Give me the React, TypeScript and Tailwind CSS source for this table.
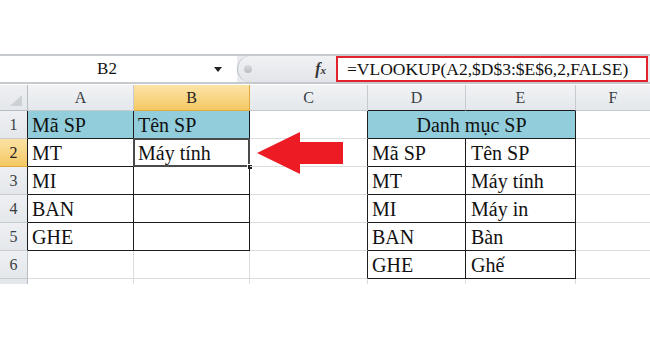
import React from "react"

const serif = "[font-family:'Liberation_Serif','Times_New_Roman',serif]"

// table border / gridline helpers
const grid = "border-r border-b border-[#dadcdd]"
const tbl = "border-r border-b border-[#1c1c1c]"
const blue = "bg-[#92cddc]"

type Row = {
  n: number
  a: string
  b: string
  d: string
  e: string
}

const rows: Row[] = [
  { n: 2, a: "MT", b: "Máy tính", d: "Mã SP", e: "Tên SP" },
  { n: 3, a: "MI", b: "", d: "MT", e: "Máy tính" },
  { n: 4, a: "BAN", b: "", d: "MI", e: "Máy in" },
  { n: 5, a: "GHE", b: "", d: "BAN", e: "Bàn" },
  { n: 6, a: "", b: "", d: "GHE", e: "Ghế" },
]

const Arrow = () => (
  <svg width="86" height="42" viewBox="0 0 86 42" className="absolute left-[7px] top-[-7px]">
    <polygon points="0,21 43,0 43,10 86,10 86,32 43,32 43,42" fill="#ed1c24" />
  </svg>
)

const RowHead = ({ n, active, edge }: { n: number; active?: boolean; edge?: boolean }) => (
  <div
    className={`w-[28px] h-full flex items-center justify-center text-[16px] border-b ${
      active
        ? "bg-gradient-to-b from-[#fbe3a4] to-[#f5c862] border-[#e2a93c] text-[#222]"
        : "bg-gradient-to-b from-[#eef0f3] to-[#e4e7eb] border-[#c7cbd0] text-[#3a3f46]"
    } ${edge ? "border-r border-r-[#1c1c1c]" : "border-r border-r-[#b7bcc3]"}`}
  >
    {n}
  </div>
)

export default function App() {
  return (
    <div className={`w-[650px] h-[340px] bg-white overflow-hidden ${serif}`}>
      <div className="h-[54px]" />

      {/* formula bar */}
      <div className="h-[30px] flex border-t-2 border-b-2 border-[#c6cacf] bg-[#e9ebee]">
        <div className="w-[237px] bg-white flex items-center">
          <div className="w-[214px] text-center text-[17px] text-[#111]">B2</div>
          <svg width="8" height="5" viewBox="0 0 8 5" className="mt-[1px]">
            <polygon points="0,0 8,0 4,5" fill="#222" />
          </svg>
        </div>
        <div className="w-[99px] flex items-center bg-gradient-to-b from-[#f0f2f4] to-[#e2e5e9] rounded-l-full border-l border-[#b9bec5]">
          <div className="ml-[6px] w-[8px] h-[8px] rounded-full bg-gradient-to-b from-[#d8dbdf] to-[#b9bdc3]" />
          <div className="ml-auto mr-[10px] text-[16px] italic font-bold text-[#333] leading-none">
            f<span className="text-[11px]">x</span>
          </div>
        </div>
        <div className="w-[312px] bg-white border-2 border-[#e3222b] flex items-center pl-[9px] text-[17.5px] text-[#111] whitespace-nowrap">
          =VLOOKUP(A2,$D$3:$E$6,2,FALSE)
        </div>
      </div>
      <div className="h-[1px]" />

      {/* column headers */}
      <div className="flex h-[26px] text-[16px] text-[#3a3f46]">
        <div className="w-[28px] h-full bg-gradient-to-b from-[#eef0f3] to-[#e4e7eb] border-r border-b border-[#b7bcc3] flex items-end justify-end pr-[5px] pb-[4px]">
          <svg width="12" height="11" viewBox="0 0 12 11">
            <polygon points="12,0 12,11 0,11" fill="#cdd1d6" />
          </svg>
        </div>
        <div className="w-[106px] h-full flex items-center justify-center bg-gradient-to-b from-[#f1f3f5] to-[#e4e7eb] border-r border-b border-[#c7cbd0]">A</div>
        <div className="w-[116px] h-full flex items-center justify-center bg-gradient-to-b from-[#fce4a6] to-[#f5c862] border-r border-b border-[#e2a93c] text-[#222]">B</div>
        <div className="w-[118px] h-full flex items-center justify-center bg-gradient-to-b from-[#f1f3f5] to-[#e4e7eb] border-r border-b border-[#c7cbd0]">C</div>
        <div className="w-[98px] h-full flex items-center justify-center bg-gradient-to-b from-[#f1f3f5] to-[#e4e7eb] border-r border-[#c7cbd0] border-b border-b-[#1c1c1c]">D</div>
        <div className="w-[110px] h-full flex items-center justify-center bg-gradient-to-b from-[#f1f3f5] to-[#e4e7eb] border-r border-[#c7cbd0] border-b border-b-[#1c1c1c]">E</div>
        <div className="w-[74px] h-full flex items-center justify-center bg-gradient-to-b from-[#f1f3f5] to-[#e4e7eb] border-b border-[#c7cbd0]">F</div>
      </div>

      {/* row 1 */}
      <div className="flex h-[28px] text-[20px] text-[#111]">
        <RowHead n={1} edge />
        <div className={`w-[106px] h-full flex items-center pl-[4px] ${blue} ${tbl}`}>Mã SP</div>
        <div className={`w-[116px] h-full flex items-center pl-[4px] ${blue} ${tbl}`}>Tên SP</div>
        <div className="w-[118px] h-full border-b border-[#dadcdd] border-r border-r-[#1c1c1c]" />
        <div className={`w-[208px] h-full flex items-center justify-center ${blue} ${tbl}`}>Danh mục SP</div>
        <div className={`w-[74px] h-full border-b border-[#dadcdd]`} />
      </div>

      {rows.map((r) => {
        const inTable = r.n <= 5
        return (
          <div key={r.n} className="flex h-[28px] text-[20px] text-[#111]">
            <RowHead n={r.n} active={r.n === 2} edge={inTable} />
            <div className={`w-[106px] h-full flex items-center pl-[4px] ${inTable ? tbl : grid}`}>{r.a}</div>
            <div className={`relative w-[116px] h-full flex items-center pl-[4px] ${inTable ? tbl : grid}`}>
              {r.b}
              {r.n === 2 && (
                <>
                  <div className="absolute left-[-1px] top-[-1px] right-[-1px] bottom-[-1px] border-2 border-[#4a4a4a]" />
                  <div className="absolute right-[-4px] bottom-[-4px] w-[6px] h-[6px] bg-[#222] border border-white" />
                </>
              )}
            </div>
            <div className="relative w-[118px] h-full border-b border-[#dadcdd] border-r border-r-[#1c1c1c]">
              {r.n === 2 && <Arrow />}
            </div>
            <div className={`w-[98px] h-full flex items-center pl-[4px] ${tbl}`}>{r.d}</div>
            <div className={`w-[110px] h-full flex items-center pl-[5px] ${tbl}`}>{r.e}</div>
            <div className="w-[74px] h-full border-b border-[#dadcdd]" />
          </div>
        )
      })}

      {/* gridline stubs below row 6 */}
      <div className="flex h-[5px]">
        <div className="w-[28px] h-full bg-[#e4e7eb] border-r border-[#b7bcc3]" />
        <div className="w-[106px] h-full border-r border-[#dadcdd]" />
        <div className="w-[116px] h-full border-r border-[#dadcdd]" />
        <div className="w-[118px] h-full border-r border-[#dadcdd]" />
        <div className="w-[98px] h-full border-r border-[#dadcdd]" />
        <div className="w-[110px] h-full border-r border-[#dadcdd]" />
      </div>
    </div>
  )
}
